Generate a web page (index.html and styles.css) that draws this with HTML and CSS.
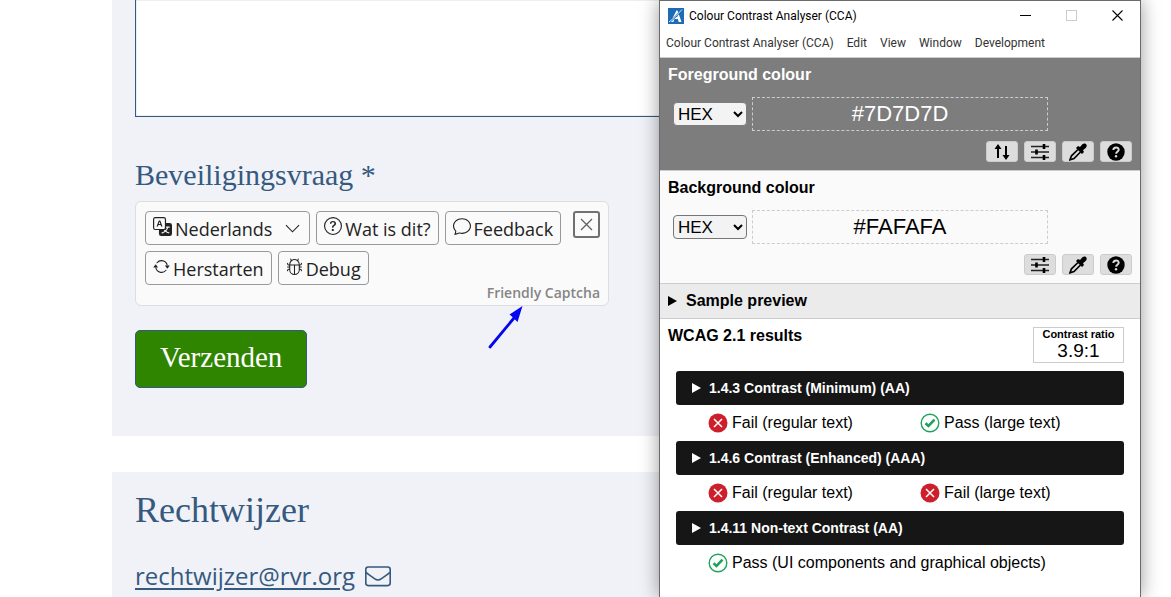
FILE: index.html
```html
<!DOCTYPE html>
<html lang="nl">
<head>
    <meta charset="UTF-8">
    <meta name="viewport" content="width=device-width, initial-scale=1.0">
    <title>Rechtwijzer</title>
    <link rel="stylesheet" href="styles.css">
</head>
<body>
    <main class="page">
        <form class="panel contact-form">
            <textarea class="message" aria-label="Bericht"></textarea>
            <h2 class="question">Beveiligingsvraag *</h2>
            <div class="captcha">
                <div class="captcha-top">
                    <div class="captcha-buttons">
                        <button type="button" class="captcha-btn">
                            <svg width="19" height="19" viewBox="0 0 16 16" fill="currentColor"><path d="M4.545 6.714 4.11 8H3l1.862-5h1.284L8 8H6.833l-.435-1.286zm1.634-.736L5.5 3.956h-.049l-.679 2.022z"/><path d="M0 2a2 2 0 0 1 2-2h7a2 2 0 0 1 2 2v3h3a2 2 0 0 1 2 2v7a2 2 0 0 1-2 2H7a2 2 0 0 1-2-2v-3H2a2 2 0 0 1-2-2zm2-1a1 1 0 0 0-1 1v7a1 1 0 0 0 1 1h7a1 1 0 0 0 1-1V2a1 1 0 0 0-1-1zm7.138 9.995q.289.451.63.846c-.748.575-1.673 1.001-2.768 1.292.178.217.451.635.555.867 1.125-.359 2.08-.844 2.886-1.494.777.665 1.739 1.165 2.93 1.472.133-.254.414-.673.629-.89-1.125-.253-2.057-.694-2.82-1.284.681-.747 1.222-1.651 1.621-2.757H14V8h-3v1.047h.765c-.318.844-.74 1.546-1.272 2.13a6 6 0 0 1-.415-.492 2 2 0 0 1-.94.31"/></svg>
                            <span>Nederlands</span>
                            <svg class="chevron" width="15" height="15" viewBox="0 0 16 16" fill="none" stroke="currentColor" stroke-width="1.2"><path d="M1 4.5l7 7 7-7"/></svg>
                        </button>
                        <button type="button" class="captcha-btn">
                            <svg width="18" height="18" viewBox="0 0 16 16" fill="currentColor"><path d="M8 15A7 7 0 1 1 8 1a7 7 0 0 1 0 14m0 1A8 8 0 1 0 8 0a8 8 0 0 0 0 16"/><path d="M5.255 5.786a.237.237 0 0 0 .241.247h.825c.138 0 .248-.113.266-.25.09-.656.54-1.134 1.342-1.134.686 0 1.314.343 1.314 1.168 0 .635-.374.927-.965 1.371-.673.489-1.206 1.06-1.168 1.987l.003.217a.25.25 0 0 0 .25.246h.811a.25.25 0 0 0 .25-.25v-.105c0-.718.273-.927 1.01-1.486.609-.463 1.244-.977 1.244-2.056 0-1.511-1.276-2.241-2.673-2.241-1.267 0-2.655.59-2.75 2.286m1.557 5.763c0 .533.425.927 1.01.927.609 0 1.028-.394 1.028-.927 0-.552-.42-.94-1.029-.94-.584 0-1.009.388-1.009.94"/></svg>
                            <span>Wat is dit?</span>
                        </button>
                        <button type="button" class="captcha-btn">
                            <svg width="18" height="18" viewBox="0 0 16 16" fill="currentColor"><path d="M2.678 11.894a1 1 0 0 1 .287.801 11 11 0 0 1-.398 2c1.395-.323 2.247-.697 2.634-.893a1 1 0 0 1 .71-.074A8 8 0 0 0 8 14c3.996 0 7-2.807 7-6s-3.004-6-7-6-7 2.808-7 6c0 1.468.617 2.83 1.678 3.894m-.493 3.905a22 22 0 0 1-.713.129c-.2.032-.352-.176-.273-.362a10 10 0 0 0 .244-.637l.003-.01c.248-.72.45-1.548.524-2.319C.743 11.37 0 9.76 0 8c0-3.866 3.582-7 8-7s8 3.134 8 7-3.582 7-8 7a9 9 0 0 1-2.347-.306c-.52.263-1.639.742-3.468 1.105"/></svg>
                            <span>Feedback</span>
                        </button>
                        <button type="button" class="captcha-btn">
                            <svg width="17" height="17" viewBox="0 0 16 16" fill="currentColor"><path d="M11.534 7h3.932a.25.25 0 0 1 .192.41l-1.966 2.36a.25.25 0 0 1-.384 0l-1.966-2.36a.25.25 0 0 1 .192-.41m-11 2h3.932a.25.25 0 0 0 .192-.41L2.692 6.23a.25.25 0 0 0-.384 0L.342 8.59A.25.25 0 0 0 .534 9"/><path d="M8 3c-1.552 0-2.94.707-3.857 1.818a.5.5 0 1 1-.771-.636A6.002 6.002 0 0 1 13.917 7H12.9A5 5 0 0 0 8 3M3.1 9a5.002 5.002 0 0 0 8.757 2.182.5.5 0 1 1 .771.636A6.002 6.002 0 0 1 2.083 9z"/></svg>
                            <span>Herstarten</span>
                        </button>
                        <button type="button" class="captcha-btn">
                            <svg width="17" height="17" viewBox="0 0 16 16" fill="currentColor"><path d="M4.355.522a.5.5 0 0 1 .623.333l.291.956A5 5 0 0 1 8 1c1.007 0 1.946.298 2.731.811l.29-.956a.5.5 0 1 1 .957.29l-.41 1.352A5 5 0 0 1 13 6h.5a.5.5 0 0 0 .5-.5V5a.5.5 0 0 1 1 0v.5A1.5 1.5 0 0 1 13.5 7H13v1h1.5a.5.5 0 0 1 0 1H13v1h.5a1.5 1.5 0 0 1 1.5 1.5v.5a.5.5 0 1 1-1 0v-.5a.5.5 0 0 0-.5-.5H13a5 5 0 0 1-10 0h-.5a.5.5 0 0 0-.5.5v.5a.5.5 0 1 1-1 0v-.5A1.5 1.5 0 0 1 2.5 10H3V9H1.5a.5.5 0 0 1 0-1H3V7h-.5A1.5 1.5 0 0 1 1 5.5V5a.5.5 0 0 1 1 0v.5a.5.5 0 0 0 .5.5H3c0-1.364.547-2.601 1.432-3.503l-.41-1.352a.5.5 0 0 1 .333-.623M4 7v4a4 4 0 0 0 3.5 3.97V7zm4.5 0v7.97A4 4 0 0 0 12 11V7zM12 6a4 4 0 0 0-1.334-2.982A3.98 3.98 0 0 0 8 2a3.98 3.98 0 0 0-2.667 1.018A4 4 0 0 0 4 6z"/></svg>
                            <span>Debug</span>
                        </button>
                    </div>
                    <button type="button" class="captcha-close" aria-label="Sluiten">
                        <svg width="13" height="13" viewBox="0 0 13 13" fill="none" stroke="currentColor" stroke-width="1.3"><path d="M1 1l11 11M12 1L1 12"/></svg>
                    </button>
                </div>
                <a class="captcha-brand" href="#">Friendly Captcha</a>
                <svg class="arrow" width="36" height="44" viewBox="0 0 36 44"><path d="M2 42L26 13" stroke="#0505f0" stroke-width="2.8" stroke-linecap="round"/><path d="M34.500 1L21.500 9.500 24.500 12 29.500 17z" fill="#0505f0"/></svg>
            </div>
            <button type="submit" class="submit-btn">Verzenden</button>
        </form>
        <section class="panel contact">
            <h1 class="contact-title">Rechtwijzer</h1>
            <div class="contact-line">
                <a class="mail-link" href="mailto:rechtwijzer@rvr.org">rechtwijzer@rvr.org</a>
                <svg width="26" height="21" viewBox="0 0 26 21" fill="none" stroke="currentColor" stroke-width="1.6"><rect x=".8" y="1" width="24.400" height="18.600" rx="2.500"/><path d="M1 6.500c3 2.200 6 4.200 8.500 6.200 2.500 1.900 4.500 1.900 7 0 2.500-2 5.500-4 8.500-6.200"/></svg>
            </div>
        </section>
    </main>

    <div class="window" lang="en">
        <header class="titlebar">
            <svg width="16" height="16" viewBox="0 0 16 16"><rect width="16" height="16" fill="#1b6cb5"/><path d="M2.500 14L8.500 2.500h1L13.500 14h-2.800l-.9-3H6.500l-1.200 3zM7.500 9h1.900l-.7-3z" fill="#fff" fill-rule="evenodd"/><path d="M1 14.500C4 12 9 8 14.500 1" stroke="#1b6cb5" stroke-width="1.800" fill="none"/><path d="M1 14C5 11 9 7 14 1.500" stroke="#fff" stroke-width=".8" fill="none"/></svg>
            <span class="window-title">Colour Contrast Analyser (CCA)</span>
            <div class="window-controls">
                <button type="button" aria-label="Minimize"><svg width="11" height="11" viewBox="0 0 11 11" stroke="#000"><path d="M0 5.500h11"/></svg></button>
                <button type="button" aria-label="Maximize" disabled><svg width="11" height="11" viewBox="0 0 11 11" fill="none" stroke="#ccc"><rect x=".5" y=".5" width="10" height="10"/></svg></button>
                <button type="button" aria-label="Close"><svg width="11" height="11" viewBox="0 0 11 11" stroke="#000" stroke-width="1.100"><path d="M.5.5l10 10M10.500.5l-10 10"/></svg></button>
            </div>
        </header>
        <nav class="menubar">
            <span>Colour Contrast Analyser (CCA)</span>
            <span>Edit</span>
            <span>View</span>
            <span>Window</span>
            <span>Development</span>
        </nav>

        <section class="colour foreground">
            <h2>Foreground colour</h2>
            <div class="colour-row">
                <select aria-label="Foreground format"><option>HEX</option><option>RGB</option><option>HSL</option></select>
                <input type="text" value="#7D7D7D" aria-label="Foreground value">
            </div>
            <div class="tools">
                <button type="button" aria-label="Switch colours"><svg width="18" height="18" viewBox="0 0 18 18"><path d="M5 15V4M13 3v11" stroke="#000" stroke-width="2"/><path d="M5 1L1.500 6h7zM13 17l-3.500-5h7z"/></svg></button>
                <button type="button" aria-label="Colour sliders"><svg width="18" height="18" viewBox="0 0 18 18"><path d="M0 3.500h18M0 9h18M0 14.500h18" stroke="#222" stroke-width="1.500"/><path d="M13 1v5M5.500 6.500v5M13 12v5" stroke="#000" stroke-width="2.600"/></svg></button>
                <button type="button" aria-label="Pick colour"><svg width="18" height="18" viewBox="0 0 18 18"><path d="M9 6.500l-6.500 6.300-1.500 4 4-1.300L11.500 9" fill="#ddd" stroke="#000" stroke-width="1.700"/><path d="M7 5l2-2 2 1 2.400-2.700c1.500-1.400 3.300-.8 3.900.2.700 1 .4 2.400-.7 3.500L14 7.200l1 1.800-2 2z"/></svg></button>
                <button type="button" aria-label="Help"><svg width="18" height="18" viewBox="0 0 18 18"><circle cx="9" cy="9" r="8.700"/><path d="M6.300 7C6.400 3.500 11.900 3.700 11.700 6.800 11.500 8.800 9.100 8.700 9.100 10.800" fill="none" stroke="#ddd" stroke-width="1.900"/><circle cx="9" cy="13.200" r="1.200" fill="#ddd"/></svg></button>
            </div>
        </section>

        <section class="colour background">
            <h2>Background colour</h2>
            <div class="colour-row">
                <select aria-label="Background format"><option>HEX</option><option>RGB</option><option>HSL</option></select>
                <input type="text" value="#FAFAFA" aria-label="Background value">
            </div>
            <div class="tools">
                <button type="button" aria-label="Colour sliders"><svg width="18" height="18" viewBox="0 0 18 18"><path d="M0 3.500h18M0 9h18M0 14.500h18" stroke="#222" stroke-width="1.500"/><path d="M13 1v5M5.500 6.500v5M13 12v5" stroke="#000" stroke-width="2.600"/></svg></button>
                <button type="button" aria-label="Pick colour"><svg width="18" height="18" viewBox="0 0 18 18"><path d="M9 6.500l-6.500 6.300-1.500 4 4-1.300L11.500 9" fill="#ddd" stroke="#000" stroke-width="1.700"/><path d="M7 5l2-2 2 1 2.400-2.700c1.500-1.400 3.300-.8 3.900.2.700 1 .4 2.400-.7 3.500L14 7.200l1 1.800-2 2z"/></svg></button>
                <button type="button" aria-label="Help"><svg width="18" height="18" viewBox="0 0 18 18"><circle cx="9" cy="9" r="8.700"/><path d="M6.300 7C6.400 3.500 11.900 3.700 11.700 6.800 11.500 8.800 9.100 8.700 9.100 10.800" fill="none" stroke="#ddd" stroke-width="1.900"/><circle cx="9" cy="13.200" r="1.200" fill="#ddd"/></svg></button>
            </div>
        </section>

        <details class="sample">
            <summary><svg width="9" height="10" viewBox="0 0 9 10" fill="currentColor"><path d="M0 0l9 5-9 5z"/></svg>Sample preview</summary>
        </details>

        <section class="results">
            <div class="results-head">
                <h2>WCAG 2.1 results</h2>
                <div class="ratio">
                    <span class="ratio-label">Contrast ratio</span>
                    <span class="ratio-value">3.9:1</span>
                </div>
            </div>
            <details class="criterion">
                <summary><svg width="9" height="10" viewBox="0 0 9 10" fill="currentColor"><path d="M0 0l9 5-9 5z"/></svg>1.4.3 Contrast (Minimum) (AA)</summary>
            </details>
            <div class="outcome">
                <span class="fail"><svg width="20" height="20" viewBox="0 0 20 20"><circle cx="10" cy="10" r="9.500" fill="#cc1f2b"/><path d="M6 6l8 8M14 6l-8 8" stroke="#fff" stroke-width="1.500"/></svg>Fail (regular text)</span>
                <span class="pass"><svg width="20" height="20" viewBox="0 0 20 20" fill="none" stroke="#1ea35a"><circle cx="10" cy="10" r="8.800" stroke-width="1.400"/><path d="M5.500 10.200l3 2.800 6-6.300" stroke-width="2.600"/></svg>Pass (large text)</span>
            </div>
            <details class="criterion">
                <summary><svg width="9" height="10" viewBox="0 0 9 10" fill="currentColor"><path d="M0 0l9 5-9 5z"/></svg>1.4.6 Contrast (Enhanced) (AAA)</summary>
            </details>
            <div class="outcome">
                <span class="fail"><svg width="20" height="20" viewBox="0 0 20 20"><circle cx="10" cy="10" r="9.500" fill="#cc1f2b"/><path d="M6 6l8 8M14 6l-8 8" stroke="#fff" stroke-width="1.500"/></svg>Fail (regular text)</span>
                <span class="fail"><svg width="20" height="20" viewBox="0 0 20 20"><circle cx="10" cy="10" r="9.500" fill="#cc1f2b"/><path d="M6 6l8 8M14 6l-8 8" stroke="#fff" stroke-width="1.500"/></svg>Fail (large text)</span>
            </div>
            <details class="criterion">
                <summary><svg width="9" height="10" viewBox="0 0 9 10" fill="currentColor"><path d="M0 0l9 5-9 5z"/></svg>1.4.11 Non-text Contrast (AA)</summary>
            </details>
            <div class="outcome single">
                <span class="pass"><svg width="20" height="20" viewBox="0 0 20 20" fill="none" stroke="#1ea35a"><circle cx="10" cy="10" r="8.800" stroke-width="1.400"/><path d="M5.500 10.200l3 2.800 6-6.300" stroke-width="2.600"/></svg>Pass (UI components and graphical objects)</span>
            </div>
        </section>
    </div>
</body>
</html>
```
FILE: styles.css
```css
/* General Styles */
* {
    box-sizing: border-box;
}

body {
    font-family: "Open Sans", sans-serif;
    background-color: #fff;
    color: #222;
    margin: 0;
}

h1, h2 {
    margin: 0;
}

button {
    font-family: inherit;
    cursor: pointer;
}

svg {
    flex-shrink: 0;
}

/* Page */
.page {
    min-height: 100vh;
    margin: 0 112px;
    display: flex;
    flex-direction: column;
    gap: 36px;
}

.panel {
    background-color: #f1f2f7;
    color: #35597f;
    padding: 0 23px;
}

.contact-form {
    padding-bottom: 48px;
}

.message {
    display: block;
    width: 100%;
    height: 117px;
    border: 1px solid #35597f;
    border-top: none;
    background-color: #fff;
    box-shadow: inset 0 0 1px #35597f;
    resize: none;
}

.question {
    margin: 38px 0 6px;
    font-family: "Liberation Serif", serif;
    font-size: 30px;
    font-weight: normal;
    line-height: 40px;
}

/* Captcha */
.captcha {
    position: relative;
    max-width: 474px;
    padding: 9px 8px 4px 9px;
    border: 1px solid #dcdde0;
    border-radius: 6px;
    background-color: #fafafa;
    color: #222;
}

.captcha-top {
    display: flex;
    justify-content: space-between;
    align-items: flex-start;
}

.captcha-buttons {
    display: flex;
    flex-wrap: wrap;
    gap: 6px;
}

.captcha-btn {
    display: flex;
    align-items: center;
    gap: 3px;
    height: 34px;
    padding: 0 7px;
    border: 1px solid #999;
    border-radius: 4px;
    background-color: #fafafa;
    color: #222;
    font-size: 18px;
    line-height: 32px;
}

.captcha-btn span {
    padding-top: 2px;
}

.captcha-btn svg {
    margin-bottom: 4px;
}

.captcha-btn .chevron {
    margin: 0 2px 0 10px;
}

.captcha-close {
    display: flex;
    flex-shrink: 0;
    align-items: center;
    justify-content: center;
    width: 27px;
    height: 27px;
    padding: 0;
    border: 2px solid #707070;
    border-radius: 3px;
    background-color: #fafafa;
    color: #606060;
}

.captcha-brand {
    display: block;
    color: #858585;
    font-size: 14px;
    font-weight: 600;
    line-height: 16px;
    text-align: right;
    text-decoration: none;
}

.arrow {
    position: absolute;
    top: 103px;
    left: 352px;
}

.submit-btn {
    display: block;
    margin-top: 24px;
    height: 58px;
    padding: 0 24px 4px;
    border: 1px solid #35597f;
    border-radius: 5px;
    background-color: #2f8400;
    color: #fff;
    font-family: "Liberation Serif", serif;
    font-size: 29px;
}

/* Contact */
.contact {
    flex: 1;
    padding-top: 18px;
}

.contact-title {
    font-family: "Liberation Serif", serif;
    font-size: 36px;
    font-weight: normal;
    line-height: 40px;
}

.contact-line {
    display: flex;
    align-items: center;
    gap: 10px;
    margin-top: 29px;
    line-height: 34px;
}

.mail-link {
    color: #35597f;
    font-size: 24px;
    text-decoration-thickness: 2px;
    text-underline-offset: 3px;
}

/* Analyser window */
.window {
    position: absolute;
    top: 0;
    right: 30px;
    width: 482px;
    min-height: 100%;
    border: 1px solid #6b6b6b;
    border-bottom: none;
    background-color: #fff;
    box-shadow: 0 0 18px rgba(0, 0, 0, 0.4);
    color: #000;
    font-family: "Liberation Sans", sans-serif;
    font-size: 16px;
}

.window h2 {
    font-size: 16px;
    line-height: 18px;
}

.titlebar {
    display: flex;
    align-items: center;
    gap: 5px;
    height: 29px;
    padding-left: 8px;
    font-family: Roboto, sans-serif;
    font-size: 12px;
}

.window-controls {
    display: flex;
    margin-left: auto;
}

.window-controls button {
    display: flex;
    align-items: center;
    justify-content: center;
    width: 46px;
    height: 29px;
    padding: 0;
    border: none;
    background: none;
}

.menubar {
    display: flex;
    gap: 13px;
    height: 27px;
    padding-left: 6px;
    color: #333;
    font-family: Roboto, sans-serif;
    font-size: 12px;
    line-height: 27px;
}

.colour {
    height: 113px;
    padding: 8px;
    border-top: 1px solid #ccc;
}

.foreground {
    background-color: #7d7d7d;
    color: #fff;
}

.background {
    background-color: #fafafa;
}

.colour-row {
    display: flex;
    align-items: center;
    gap: 5px;
    margin-top: 13px;
    padding-left: 5px;
}

.colour-row select {
    width: 74px;
    height: 24px;
    border: 1px solid #767676;
    border-radius: 4px;
    background-color: #f3f3f3;
    color: #000;
    font-family: inherit;
    font-size: 17px;
}

.colour-row input {
    width: 296px;
    height: 34px;
    padding: 0;
    border: 1px dashed #ccc;
    background: transparent;
    color: inherit;
    font-family: inherit;
    font-size: 22px;
    text-align: center;
}

.foreground select {
    border-color: #7d7d7d;
}

.tools {
    display: flex;
    justify-content: flex-end;
    gap: 6px;
    margin-top: 10px;
}

.tools button {
    display: flex;
    align-items: center;
    justify-content: center;
    width: 32px;
    height: 21px;
    padding: 0;
    border: 1px solid #ccc;
    border-radius: 3px;
    background-color: #ddd;
}

summary {
    display: flex;
    align-items: center;
    list-style: none;
    cursor: pointer;
    font-weight: bold;
}

.sample summary {
    gap: 9px;
    height: 36px;
    padding-left: 8px;
    border-top: 1px solid #ccc;
    border-bottom: 1px solid #ccc;
    background-color: #ebebeb;
}

/* Results */
.results {
    padding: 8px 16px;
}

.results-head {
    display: flex;
    justify-content: space-between;
    align-items: flex-start;
    margin-left: -8px;
    margin-bottom: 8px;
}

.ratio {
    display: flex;
    flex-direction: column;
    width: 91px;
    height: 36px;
    border: 1px solid #ccc;
    text-align: center;
}

.ratio-label {
    font-size: 11px;
    font-weight: bold;
    line-height: 12px;
}

.ratio-value {
    font-size: 19px;
    line-height: 22px;
}

.criterion summary {
    gap: 8px;
    height: 34px;
    padding-left: 16px;
    border-radius: 3px;
    background-color: #161616;
    color: #fff;
    font-size: 14px;
}

.outcome {
    display: grid;
    grid-template-columns: 1fr 1fr;
    gap: 8px;
    height: 36px;
    padding-left: 32px;
}

.outcome.single {
    grid-template-columns: 1fr;
}

.outcome span {
    display: flex;
    align-items: center;
    gap: 4px;
}
```
